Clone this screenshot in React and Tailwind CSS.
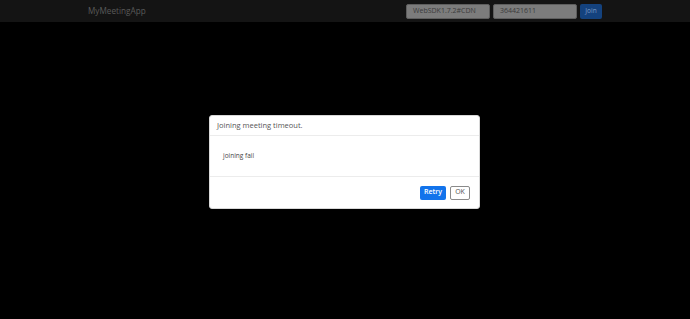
import React from 'react';

const font = { fontFamily: '"Open Sans", "Liberation Sans", sans-serif' };

const Navbar = () => (
  <nav className="h-[22px] bg-[#141414] flex items-center">
    <div className="pl-[88px] text-[8.2px] text-[#5a5a5a] leading-none">MyMeetingApp</div>
    <div className="ml-auto flex items-center gap-[3px] pr-[88px]">
      <div className="w-[84px] h-[15px] bg-[#7c7c7c] border border-[#5e5e5e] rounded-[2px] flex items-center pl-[6px] text-[7px] text-[#3b3b3b]">
        WebSDK1.7.2#CDN
      </div>
      <div className="w-[84px] h-[15px] bg-[#7c7c7c] border border-[#5e5e5e] rounded-[2px] flex items-center pl-[6px] text-[7px] text-[#3b3b3b]">
        364421611
      </div>
      <button className="w-[22px] h-[15px] bg-[#14427e] rounded-[2px] text-[6.5px] text-[#7f9cc4] flex items-center justify-center">
        Join
      </button>
    </div>
  </nav>
);

const Modal = () => (
  <div className="w-[271px] h-[94px] bg-white rounded-[3px] border border-[#d8d8d8] flex flex-col">
    <div className="h-[20px] border-b border-[#ececec] flex items-center pl-[7px] text-[7.5px] text-[#555]">
      Joining meeting timeout.
    </div>
    <div className="h-[41px] border-b border-[#ececec] flex items-center pl-[13px] text-[6.5px] text-[#444]">
      joining fail
    </div>
    <div className="flex-1 flex items-center justify-end gap-[4px] pr-[9px]">
      <button className="w-[26px] h-[14px] bg-[#1273eb] rounded-[2px] text-white text-[7px] font-semibold flex items-center justify-center">
        Retry
      </button>
      <button className="w-[20px] h-[14px] bg-white border border-[#8a8a8a] rounded-[2px] text-[#555] text-[7px] flex items-center justify-center">
        OK
      </button>
    </div>
  </div>
);

export default function App() {
  return (
    <div className="w-[690px] h-[319px] bg-black flex flex-col" style={font}>
      <Navbar />
      <div className="flex-1 pl-[209px] pt-[93px]">
        <Modal />
      </div>
    </div>
  );
}
